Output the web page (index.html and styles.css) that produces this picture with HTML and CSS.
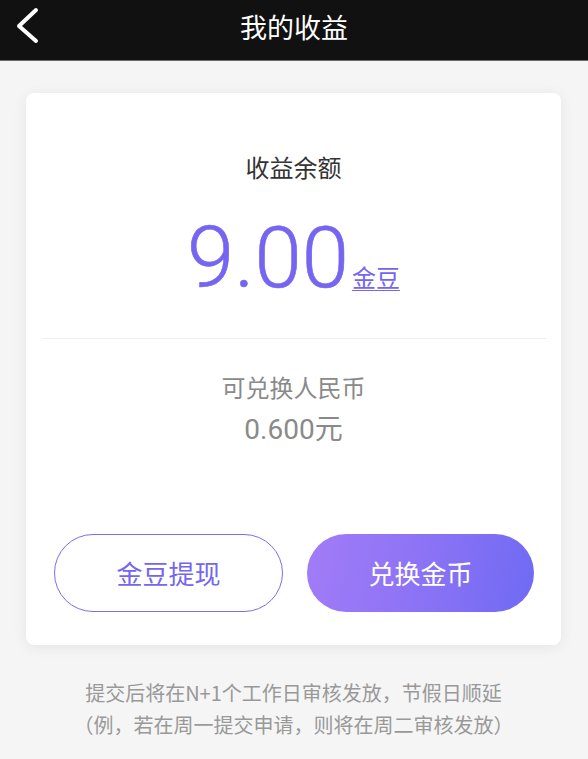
FILE: index.html
```html
<!DOCTYPE html>
<html lang="zh-CN">
<head>
<meta charset="utf-8">
<title>我的收益</title>
<link rel="stylesheet" href="styles.css">
</head>
<body>
<header class="topbar">
  <div class="back">
    <svg width="40" height="50" viewBox="0 0 40 50">
      <polyline points="36,10 19,26 36,41" fill="none" stroke="#fff" stroke-width="4" stroke-linecap="round" stroke-linejoin="round"/>
    </svg>
  </div>
  <h1 class="title">我的收益</h1>
  <div></div>
</header>
<main class="page">
  <section class="card">
    <div class="label">收益余额</div>
    <div class="amount-row">
      <span class="amount">9.00</span><span class="unit">金豆</span>
    </div>
    <div class="divider"></div>
    <div class="sub-label">可兑换人民币</div>
    <div class="sub-value">0.600元</div>
    <div class="actions">
      <button class="btn btn-outline">金豆提现</button>
      <button class="btn btn-fill">兑换金币</button>
    </div>
  </section>
  <p class="note">提交后将在N+1个工作日审核发放，节假日顺延<br>（例，若在周一提交申请，则将在周二审核发放）</p>
</main>
</body>
</html>
```
FILE: styles.css
```css
* { box-sizing: border-box; }
html, body {
  margin: 0;
  padding: 0;
  background: #f5f5f5;
  font-family: Roboto, "Noto Sans CJK SC", sans-serif;
}
.topbar {
  height: 61px;
  background: #111111;
  border-bottom: 1px solid #6a6a6a;
  display: grid;
  grid-template-columns: 1fr auto 1fr;
  align-items: start;
}
.back {
  height: 50px;
  display: flex;
}
.title {
  margin: 0;
  font-family: "Noto Sans CJK SC", sans-serif;
  font-weight: 400;
  font-size: 27px;
  line-height: 53px;
  color: #ffffff;
}
.page {
  padding: 32px 27px 0 26px;
}
.card {
  background: #ffffff;
  border-radius: 8px;
  box-shadow: 0 2px 14px rgba(0, 0, 0, 0.07);
  padding: 60px 0 33px;
  text-align: center;
}
.label {
  font-family: "Noto Sans CJK SC", sans-serif;
  font-size: 24px;
  line-height: 28px;
  color: #333333;
}
.amount-row {
  margin-top: 35px;
  display: flex;
  justify-content: center;
  align-items: baseline;
  height: 84px;
}
.amount {
  font-family: Roboto, sans-serif;
  font-weight: 300;
  font-size: 85px;
  line-height: 84px;
  color: #7565f1;
  -webkit-text-stroke: 0.6px #7565f1;
}
.unit {
  margin-left: 3px;
  font-family: "Noto Sans CJK SC", sans-serif;
  font-size: 24px;
  line-height: 28px;
  color: #7565f1;
  text-decoration: underline;
  text-underline-offset: 3px;
  text-decoration-thickness: 1px;
}
.divider {
  margin: 38px 14px 0 16px;
  height: 1px;
  background: #efefef;
}
.sub-label {
  margin-top: 33px;
  font-family: "Noto Sans CJK SC", sans-serif;
  font-size: 24px;
  line-height: 30px;
  color: #8a8a8a;
}
.sub-value {
  margin-top: 11px;
  font-family: Roboto, "Noto Sans CJK SC", sans-serif;
  font-size: 28px;
  line-height: 34px;
  color: #8a8a8a;
}
.actions {
  margin-top: 87px;
  padding: 0 27px 0 28px;
  display: flex;
  gap: 24px;
}
.btn {
  flex: 1;
  height: 78px;
  border-radius: 39px;
  font-family: "Noto Sans CJK SC", sans-serif;
  font-size: 26px;
  line-height: 30px;
  padding: 0;
}
.btn-outline {
  background: #ffffff;
  border: 1.5px solid #7b6cf0;
  color: #7466ee;
}
.btn-fill {
  border: none;
  background: linear-gradient(100deg, #a27cf7 0%, #8c73f5 50%, #6f6af4 100%);
  color: #ffffff;
}
.note {
  margin: 32px 0 0;
  font-family: "Noto Sans CJK SC", sans-serif;
  font-size: 20px;
  line-height: 32px;
  color: #999999;
  text-align: center;
}
```
